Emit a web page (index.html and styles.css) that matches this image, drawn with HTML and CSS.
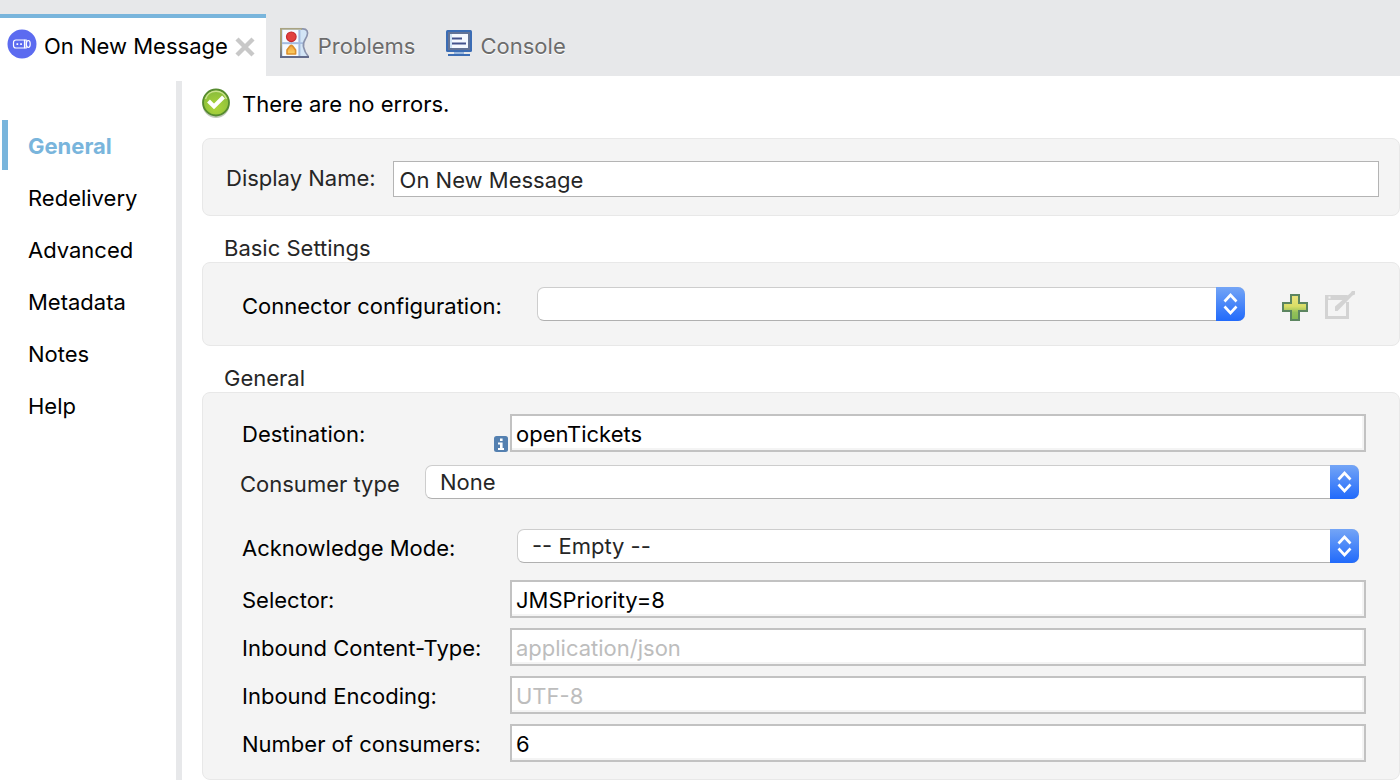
FILE: index.html
```html
<!DOCTYPE html>
<html lang="en">
<head>
<meta charset="utf-8">
<title>On New Message</title>
<link rel="stylesheet" href="styles.css">
</head>
<body>
<header class="tabs" role="tablist">
  <div class="tab tab-active">
    <svg class="tab-logo" width="30" height="30" viewBox="0 0 30 30" aria-hidden="true">
      <circle cx="15" cy="15" r="14.500" fill="#5c6bf0"/>
      <g fill="none" stroke="#fff" stroke-width="1.200">
        <path d="M17.500 11H9a2.500 2.500 0 0 0-2.500 2.500v3A2.500 2.500 0 0 0 9 19h8.500z"/>
        <path d="M17.500 11h1.700v8h-1.700"/>
        <ellipse cx="21.300" cy="15" rx="1.900" ry="3.500"/>
      </g>
      <path d="M9.500 14.200h1.700v1.700H9.500zM13.200 14.200h1.700v1.700h-1.700z" fill="#fff"/>
    </svg>
    <button class="tab-label" type="button" role="tab" aria-selected="true">On New Message</button>
    <button class="tab-close" type="button" aria-label="Close">
      <svg width="20" height="20" viewBox="0 0 20 20"><path d="M2 2l16 16M18 2L2 18" stroke="#c8c8c8" stroke-width="4.400"/></svg>
    </button>
  </div>
  <button class="tab tab-idle" type="button" role="tab" aria-selected="false">
    <svg width="30" height="32" viewBox="0 0 30 32" aria-hidden="true">
      <defs>
        <linearGradient id="frame" x1="0" y1="0" x2="0" y2="1"><stop offset="0" stop-color="#b3a877"/><stop offset=".55" stop-color="#a39c78"/><stop offset="1" stop-color="#626b8b"/></linearGradient>
        <linearGradient id="amber" x1="0" y1="0" x2="0" y2="1"><stop offset="0" stop-color="#f2a13a"/><stop offset="1" stop-color="#fbd064"/></linearGradient>
      </defs>
      <path d="M1 2h22c4 0 5.500 3 4 7-1.500 4-4.500 6-3.500 11 .8 4 2.500 7 5 10H1z" fill="#d3e5f6"/>
      <path d="M3 3h15v12H3zM3 17.500h15V30H3z" fill="#f6faff"/>
      <path d="M19.500 3v27M2 16.200h22" stroke="#a5bcdf" stroke-width="1.800" fill="none"/>
      <path d="M21 1.800h2c4 0 5.500 3 4 7-1.500 4-4.500 6-3.500 11 .8 4 2.500 7 5 10" fill="none" stroke="#8b93ad" stroke-width="1.700"/>
      <rect x="0" y="1" width="2" height="30" fill="url(#frame)"/>
      <path d="M0 1.800h22" stroke="#a9a382" stroke-width="1.700"/>
      <path d="M0 30h29" stroke="#626b8b" stroke-width="2"/>
      <circle cx="11.300" cy="9.800" r="4.800" fill="#e2423f" stroke="#c52b30" stroke-width="1.200"/>
      <path d="M7 27v-4l3-4q1.300-1.200 2.600 0l3 4v4z" fill="url(#amber)" stroke="#dc8f2c" stroke-width="1.600" stroke-linejoin="round"/>
    </svg>
    <span>Problems</span>
  </button>
  <button class="tab tab-idle tab-console" type="button" role="tab" aria-selected="false">
    <svg width="26" height="26" viewBox="0 0 26 26" aria-hidden="true">
      <rect width="26" height="22" rx="1.500" fill="#3b6cb4"/>
      <rect x="2" y="2" width="22" height="18" fill="#637396"/>
      <rect x="4" y="4" width="18" height="14" fill="#f6f9ff"/>
      <path d="M4 4h2v14H4z" fill="#cfe3f5"/>
      <path d="M6 8.500h10M6 13.500h14" stroke="#44538c" stroke-width="1.800"/>
      <path d="M8 22h10v2H8z" fill="#9bb8de"/>
      <path d="M2 24h22v2H2z" fill="#3c6db4"/>
    </svg>
    <span>Console</span>
  </button>
</header>

<div class="body">
  <nav class="sidebar">
    <a class="nav-item nav-current" href="#general">General</a>
    <a class="nav-item" href="#redelivery">Redelivery</a>
    <a class="nav-item" href="#advanced">Advanced</a>
    <a class="nav-item" href="#metadata">Metadata</a>
    <a class="nav-item" href="#notes">Notes</a>
    <a class="nav-item" href="#help">Help</a>
  </nav>

  <main class="main">
    <div class="status">
      <svg width="30" height="32" viewBox="0 0 30 32" aria-hidden="true">
        <defs><radialGradient id="ok" cx=".5" cy=".7" r=".7"><stop offset="0" stop-color="#aed63a"/><stop offset="1" stop-color="#86bb3b"/></radialGradient></defs>
        <circle cx="14" cy="16.500" r="13.500" fill="#9aa58e" opacity=".6"/>
        <circle cx="14" cy="14.500" r="13" fill="url(#ok)" stroke="#568b2f" stroke-width="1.800"/>
        <path d="M3.500 11a11 11 0 0 1 21 0" fill="none" stroke="#c9e28c" stroke-width="1.500"/>
        <path d="M6.500 13l5.500 5.500L21.500 9" fill="none" stroke="#fff" stroke-width="4"/>
      </svg>
      <span>There are no errors.</span>
    </div>

    <section class="panel panel-name">
      <label class="soft" for="display-name">Display Name:</label>
      <input class="text-thin" id="display-name" type="text" value="On New Message">
    </section>

    <h2 class="title">Basic Settings</h2>
    <section class="panel panel-config">
      <label for="config">Connector configuration:</label>
      <div class="picker">
        <select id="config"><option></option></select>
        <svg class="arrows" width="29" height="34" viewBox="0 0 29 34" aria-hidden="true"><path d="M8.500 14.500l6-6.500 6 6.500M8.500 19.500l6 6.500 6-6.500"/></svg>
      </div>
      <button class="tool tool-add" type="button" aria-label="Add">
        <svg width="26" height="27" viewBox="0 0 26 27">
          <defs><linearGradient id="plus" x1="0" y1="0" x2="0" y2="1"><stop offset=".1" stop-color="#e8e27a"/><stop offset=".45" stop-color="#d9de66"/><stop offset=".7" stop-color="#93c05a"/><stop offset="1" stop-color="#82b950"/></linearGradient></defs>
          <path d="M9 1h8v8h8v8h-8v9H9v-9H1V9h8z" fill="url(#plus)" stroke="#5c8560" stroke-width="2"/>
        </svg>
      </button>
      <button class="tool" type="button" aria-label="Edit" disabled>
        <svg width="31" height="29" viewBox="0 0 31 29">
          <path d="M1.500 5v21.500h21V11" fill="none" stroke="#d3d3d3" stroke-width="3"/>
          <path d="M0 4h23l-3 5H0z" fill="#d3d3d3"/>
          <path d="M3.500 5.500h2v2h-2z" fill="#f4f4f4"/>
          <path d="M10 20v-4.500L25.500 2 27 0h3v3.500l-2.500 1L14 18.500 12.500 20z" fill="#d3d3d3"/>
        </svg>
      </button>
    </section>

    <h2 class="title">General</h2>
    <section class="panel panel-general">
      <div class="row">
        <label for="destination">Destination:</label>
        <svg class="info" width="14" height="16" viewBox="0 0 14 16" aria-hidden="true"><rect width="14" height="16" rx="2.500" fill="#5480b0"/><path d="M6 2.500h2.600V5H6zM4 6.500h4.600V12H10v2H4v-2h2V8.500H4z" fill="#fff"/></svg>
        <input class="text" id="destination" type="text" value="openTickets">
      </div>
      <div class="row row-consumer">
        <label class="soft" for="consumer">Consumer type</label>
        <div class="picker">
          <select id="consumer"><option>None</option></select>
          <svg class="arrows" width="29" height="34" viewBox="0 0 29 34" aria-hidden="true"><path d="M8.500 14.500l6-6.500 6 6.500M8.500 19.500l6 6.500 6-6.500"/></svg>
        </div>
      </div>
      <div class="row row-ack">
        <label for="ack">Acknowledge Mode:</label>
        <div class="picker">
          <select id="ack"><option>-- Empty --</option></select>
          <svg class="arrows" width="29" height="34" viewBox="0 0 29 34" aria-hidden="true"><path d="M8.500 14.500l6-6.500 6 6.500M8.500 19.500l6 6.500 6-6.500"/></svg>
        </div>
      </div>
      <div class="row">
        <label for="selector">Selector:</label>
        <input class="text" id="selector" type="text" value="JMSPriority=8">
      </div>
      <div class="row">
        <label for="ctype">Inbound Content-Type:</label>
        <input class="text" id="ctype" type="text" placeholder="application/json">
      </div>
      <div class="row">
        <label for="encoding">Inbound Encoding:</label>
        <input class="text" id="encoding" type="text" placeholder="UTF-8">
      </div>
      <div class="row">
        <label for="consumers">Number of consumers:</label>
        <input class="text" id="consumers" type="text" value="6">
      </div>
    </section>
  </main>
</div>
</body>
</html>
```
FILE: styles.css
```css
* { box-sizing: border-box; }

body {
  margin: 0;
  min-height: 100vh;
  display: flex;
  flex-direction: column;
  background: #fff;
  color: #000;
  font: 22px/28px Inter, "Liberation Sans", sans-serif;
}

button, input, select { font: inherit; color: inherit; margin: 0; }
button { padding: 0; border: 0; background: none; }
svg { display: block; flex: none; }

.tabs {
  display: flex;
  padding-top: 14px;
  background: #e7e8ea;
}

.tab { display: flex; align-items: center; height: 62px; }

.tab-active {
  padding: 0 11px 0 7px;
  border-top: 4px solid #79b5dc;
  background: #fff;
}

.tab-logo { margin-bottom: 6px; }
.tab-label { margin: 0 7px 2px; white-space: nowrap; }

.tab-idle {
  gap: 8px;
  padding: 0 16px 2px 14px;
  color: #6c6c6c;
  text-shadow: 0 1px 0 #fff;
}
.tab-idle svg { margin-bottom: 2px; }
.tab-idle span { padding-top: 4px; }
.tab-console { padding-left: 15px; }

.body { flex: 1; display: flex; padding-top: 5px; }

.sidebar {
  flex: none;
  width: 182px;
  padding: 39px 0 0 2px;
  border-right: 6px solid #e7e8ea;
}

.nav-item {
  display: block;
  height: 50px;
  margin-bottom: 2px;
  padding-left: 20px;
  border-left: 6px solid transparent;
  color: #000;
  line-height: 52px;
  text-decoration: none;
}
.nav-current { border-color: #79b5dc; color: #79b5dc; font-weight: 700; }

.main { flex: 1; min-width: 0; padding-left: 20px; }

.status {
  display: flex;
  align-items: center;
  gap: 10px;
  height: 45px;
  margin-bottom: 12px;
}

.panel {
  border: 1px solid #e8e8e8;
  border-radius: 8px;
  background: #f4f4f4;
}

.soft { color: #262626; }

.title {
  margin: 18px 0 0 22px;
  color: #262626;
  font-size: 22px;
  font-weight: 400;
  line-height: 28px;
}

.panel-name {
  display: flex;
  align-items: center;
  gap: 17px;
  height: 78px;
  padding: 4px 20px 0 23px;
}
.panel-name label { padding-bottom: 2px; }

.text-thin {
  flex: 1;
  min-width: 0;
  height: 36px;
  padding: 2px 6px 0;
  border: 1px solid #b4b4b4;
  background: #fff;
  color: #262626;
}

.panel-config {
  display: flex;
  align-items: center;
  height: 84px;
  padding: 0 43px 0 39px;
}
.panel-config label { flex: none; width: 295px; padding-top: 4px; }

.picker { flex: 1; min-width: 0; display: grid; }
.picker > * { grid-area: 1 / 1; }

.picker select {
  appearance: none;
  width: 100%;
  height: 34px;
  padding: 0 40px 0 14px;
  border: 1px solid #cdcdcd;
  border-bottom-color: #b0b0b0;
  border-radius: 7px;
  background: #fff;
  color: #262626;
}

.arrows {
  justify-self: end;
  border-radius: 0 7px 7px 0;
  background: linear-gradient(#74a5f6, #216afb);
  fill: none;
  stroke: #fff;
  stroke-width: 2.6;
  pointer-events: none;
}

.tool { margin-left: 13px; }
.tool svg { margin-top: 2px; }
.tool-add { margin: 4px 4px 0 37px; }

.panel-general {
  display: flex;
  flex-direction: column;
  gap: 10px;
  padding: 21px 33px 17px 39px;
}

.row { display: flex; align-items: center; height: 38px; }
.row label { flex: none; width: 268px; padding-top: 2px; white-space: nowrap; }

.text {
  flex: 1;
  min-width: 0;
  height: 38px;
  padding: 2px 4px 0;
  border: 2px solid #c2c2c2;
  background: #fff;
  box-shadow: inset 0 -2px 0 #f4f4f4, inset -2px 0 0 #f4f4f4;
}
.text::placeholder { color: #bdbdbd; opacity: 1; }

.info { align-self: flex-end; margin-left: -16px; margin-right: 2px; }

.row-consumer { padding: 2px 7px 0 0; margin: 0 0 16px -2px; }
.row-consumer label { width: 185px; padding-top: 4px; }

.row-ack { padding: 2px 7px 0 0; margin-bottom: 6px; }
.row-ack label { width: 275px; padding-top: 4px; }
```
